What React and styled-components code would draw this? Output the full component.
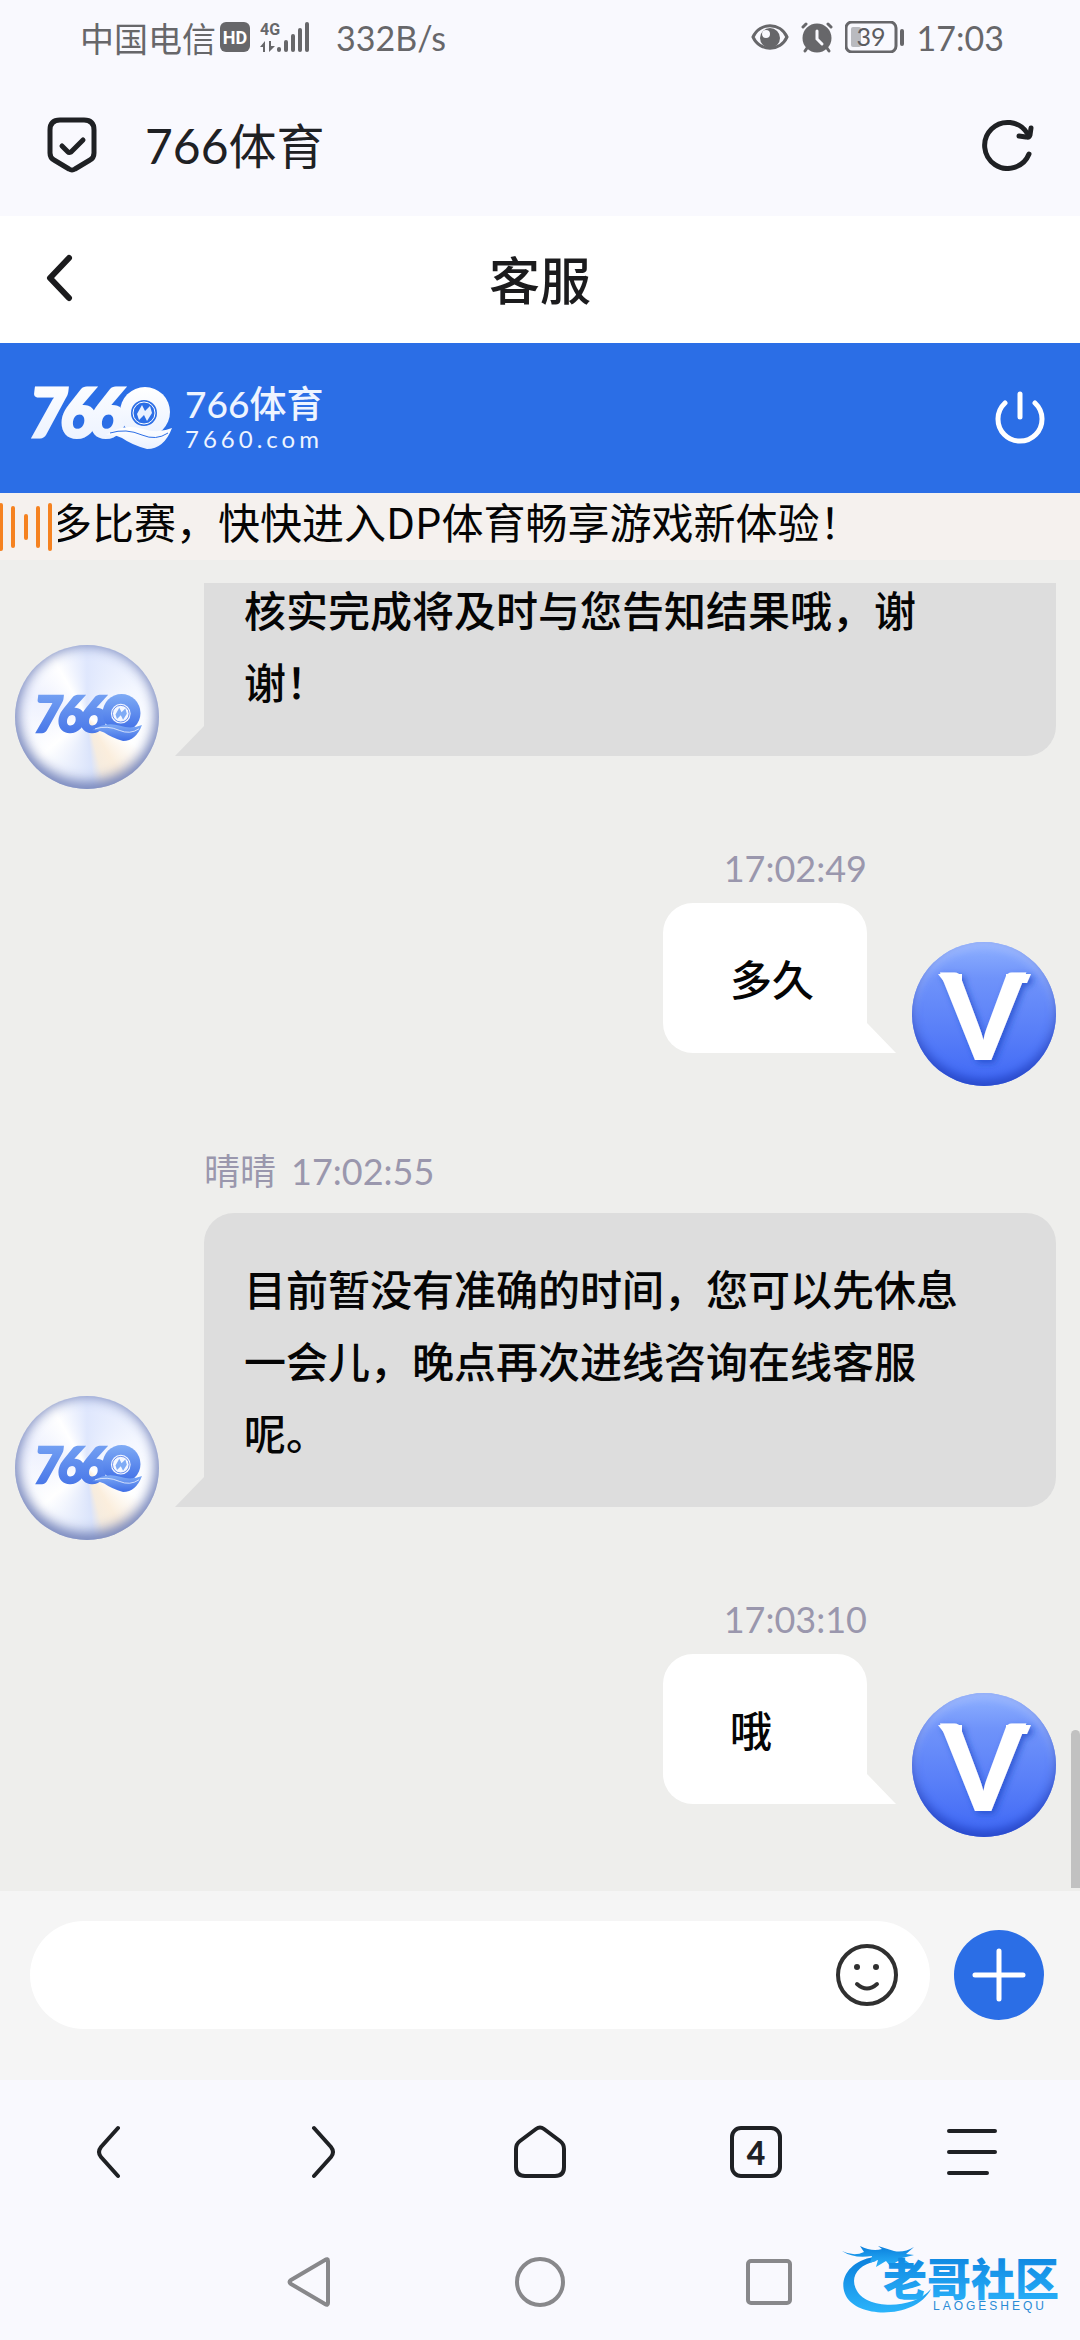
import styled, { createGlobalStyle } from "styled-components"

const App = () => {
  return (
    <Page>
      <GlobalStyle />
      <StatusBar>
        <StatusGroup>
          <span>中国电信</span>
          <HdIcon />
          <SignalIcon />
          <Speed>332B/s</Speed>
        </StatusGroup>
        <StatusGroup $gap="12px">
          <EyeIcon />
          <AlarmIcon />
          <BatteryIcon />
          <span>17:03</span>
        </StatusGroup>
      </StatusBar>

      <AddressBar>
        <ShieldIcon />
        <SiteName>766体育</SiteName>
        <IconButton aria-label="刷新">
          <ReloadIcon />
        </IconButton>
      </AddressBar>

      <TitleBar>
        <IconButton aria-label="返回">
          <BackIcon />
        </IconButton>
        <h1>客服</h1>
      </TitleBar>

      <BrandBar>
        <Brand>
          <BrandMark id="brand" width="140" from="#ffffff" to="#eaf1ff" ball="#2c6ee6" />
          <BrandText>
            <strong>766体育</strong>
            <small>7660.com</small>
          </BrandText>
        </Brand>
        <IconButton aria-label="退出">
          <PowerIcon />
        </IconButton>
      </BrandBar>

      <Notice>
        <WaveIcon />
        <Marquee>多比赛，快快进入DP体育畅享游戏新体验！</Marquee>
      </Notice>

      <Chat>
        <Messages>
          {messages.map((message) => (
            <Message key={message.id} {...message} />
          ))}
        </Messages>
        <ScrollThumb />
      </Chat>

      <Composer>
        <InputWrap>
          <input type="text" aria-label="消息" />
          <IconButton aria-label="表情">
            <SmileIcon />
          </IconButton>
        </InputWrap>
        <AddButton aria-label="更多">
          <PlusIcon />
        </AddButton>
      </Composer>

      <BrowserNav>
        <IconButton aria-label="后退">
          <ChevronIcon />
        </IconButton>
        <IconButton aria-label="前进">
          <ChevronIcon flip />
        </IconButton>
        <IconButton aria-label="主页">
          <HomeIcon />
        </IconButton>
        <TabsButton>4</TabsButton>
        <IconButton aria-label="菜单">
          <MenuIcon />
        </IconButton>
      </BrowserNav>

      <SystemNav>
        <IconButton aria-label="系统返回">
          <TriangleIcon />
        </IconButton>
        <IconButton aria-label="系统主页">
          <CircleIcon />
        </IconButton>
        <IconButton aria-label="最近任务">
          <SquareIcon />
        </IconButton>
        <Watermark>
          <DragonLogo />
        </Watermark>
      </SystemNav>
    </Page>
  )
}

const messages = [
  { id: "m1", text: "核实完成将及时与您告知结果哦，谢谢！" },
  { id: "m2", own: true, time: "17:02:49", text: "多久" },
  { id: "m3", name: "晴晴", time: "17:02:55", text: "目前暂没有准确的时间，您可以先休息一会儿，晚点再次进线咨询在线客服呢。" },
  { id: "m4", own: true, time: "17:03:10", text: "哦" },
]

const Message = ({ id, own, name, time, text }) => (
  <Row $own={own}>
    {own ? (
      <UserAvatar>
        <VMark id={id} />
      </UserAvatar>
    ) : (
      <AgentAvatar>
        <BrandMark id={id} width="106" from="#7fabf5" to="#3f6ee6" ball="#f4f7ff" solid />
      </AgentAvatar>
    )}
    <Content>
      {time && (
        <Meta $own={own}>
          {name && <span>{name}</span>}
          <time>{time}</time>
        </Meta>
      )}
      <Bubble $own={own}>{text}</Bubble>
    </Content>
  </Row>
)

/* ---- icons ---- */

const HdIcon = () => (
  <svg width="30" height="30" viewBox="0 0 30 30">
    <rect width="30" height="30" rx="6" fill="#67676a" />
    <text x="15" y="22" textAnchor="middle" fontFamily="Roboto" fontWeight="700" fontSize="18" fill="#fff">HD</text>
  </svg>
)

const SignalIcon = () => (
  <svg width="50" height="32" viewBox="0 0 50 32" fill="#67676a">
    <text x="0" y="14" fontFamily="Roboto" fontWeight="700" fontSize="16">4G</text>
    <path d="M0 26 L5 20 V31 H3 V26 Z M9 20 H11 V25 H15 L9 31 Z" />
    <rect x="17" y="26" width="4" height="5" rx="2" />
    <rect x="24" y="19" width="4" height="12" rx="2" />
    <rect x="31" y="13" width="4" height="18" rx="2" />
    <rect x="38" y="7" width="4" height="24" rx="2" />
    <rect x="45" y="1" width="4" height="30" rx="2" />
  </svg>
)

const EyeIcon = () => (
  <svg width="38" height="28" viewBox="0 0 38 28">
    <path d="M2 14 C9 -1 29 -1 36 14 C29 29 9 29 2 14 Z" fill="none" stroke="#67676a" strokeWidth="3" />
    <circle cx="19" cy="15" r="10" fill="#67676a" />
    <circle cx="15" cy="11" r="4" fill="#f9f9fe" />
  </svg>
)

const AlarmIcon = () => (
  <svg width="32" height="32" viewBox="0 0 32 32" fill="none" stroke="#67676a" strokeWidth="3" strokeLinecap="round">
    <circle cx="16" cy="17" r="13" fill="#67676a" />
    <path d="M2 6 L5 3 M30 6 L27 3 M6 27 L4 30 M26 27 L28 30" />
    <path d="M16 10 V18 L21 23" stroke="#f9f9fe" />
  </svg>
)

const BatteryIcon = () => (
  <svg width="60" height="32" viewBox="0 0 60 32">
    <rect x="1" y="1" width="50" height="30" rx="6" fill="none" stroke="#67676a" strokeWidth="3" />
    <rect x="6" y="6" width="10" height="20" rx="2" fill="#b9babf" />
    <rect x="55" y="8" width="4" height="17" rx="2" fill="#67676a" />
    <text x="26" y="25" textAnchor="middle" fontFamily="Lato" fontSize="25" fill="#5c5c60">39</text>
  </svg>
)

const ShieldIcon = () => (
  <svg width="50" height="56" viewBox="0 0 50 56" fill="none" stroke="#1f2124" strokeWidth="5" strokeLinecap="round" strokeLinejoin="round">
    <path d="M13 3 H37 Q47 3 47 13 V36 Q47 41 43 43 L28 52 Q25 54 22 52 L7 43 Q3 41 3 36 V13 Q3 3 13 3 Z" />
    <path d="M15 29 L21 35 Q22 36 24 35 L36 23" />
  </svg>
)

const ReloadIcon = () => (
  <svg width="52" height="52" viewBox="0 0 52 52" fill="none" stroke="#1f2124" strokeWidth="5" strokeLinecap="round" strokeLinejoin="round">
    <path d="M47 35 A23 23 0 1 1 45 14" />
    <path d="M49 9 L48 16 Q47 19 44 18 L37 17" />
  </svg>
)

const BackIcon = () => (
  <svg width="28" height="48" viewBox="0 0 28 48" fill="none" stroke="#1b1b1d" strokeWidth="6" strokeLinecap="round" strokeLinejoin="round">
    <path d="M24 4 L5 24 L24 44" />
  </svg>
)

const PowerIcon = () => (
  <svg width="50" height="54" viewBox="0 0 50 54" fill="none" stroke="#fff" strokeWidth="5" strokeLinecap="round">
    <path d="M10 12 A22 22 0 1 0 40 12" />
    <path d="M25 3 V26" />
  </svg>
)

const WaveIcon = () => (
  <svg width="52" height="50" viewBox="0 0 52 50" stroke="#f58220" strokeWidth="4" strokeLinecap="round">
    <path d="M1 3 V47 M13 6 V44 M26 14 V36 M38 6 V44 M50 3 V47" />
  </svg>
)

const SmileIcon = () => (
  <svg width="64" height="64" viewBox="0 0 64 64" fill="none" stroke="#303030" strokeWidth="4" strokeLinecap="round">
    <circle cx="32" cy="32" r="29" />
    <path d="M22 41 Q32 50 42 41" />
    <circle cx="22" cy="24" r="3" fill="#303030" stroke="none" />
    <circle cx="41" cy="24" r="3" fill="#303030" stroke="none" />
  </svg>
)

const PlusIcon = () => (
  <svg width="54" height="54" viewBox="0 0 54 54" stroke="#fff" strokeWidth="5" strokeLinecap="round">
    <path d="M27 3 V51 M3 27 H51" />
  </svg>
)

const ChevronIcon = ({ flip }) => (
  <svg width="26" height="54" viewBox="0 0 26 54" fill="none" stroke="#1f2124" strokeWidth="4" strokeLinecap="round">
    <path d={flip ? "M3 3 L20 22 Q24 27 20 32 L3 51" : "M23 3 L6 22 Q2 27 6 32 L23 51"} />
  </svg>
)

const HomeIcon = () => (
  <svg width="52" height="54" viewBox="0 0 52 54" fill="none" stroke="#1f2124" strokeWidth="4" strokeLinejoin="round">
    <path d="M22 4 Q26 1 30 4 L46 16 Q50 19 50 24 V42 Q50 51 41 51 H11 Q2 51 2 42 V24 Q2 19 6 16 Z" />
  </svg>
)

const MenuIcon = () => (
  <svg width="50" height="48" viewBox="0 0 50 48" stroke="#1f2124" strokeWidth="4" strokeLinecap="round">
    <path d="M2 3 H48 M2 24 H48 M2 45 H40" />
  </svg>
)

const TriangleIcon = () => (
  <svg width="48" height="52" viewBox="0 0 48 52" fill="none" stroke="#88888b" strokeWidth="4" strokeLinejoin="round">
    <path d="M38 4 Q41 2 41 5 V47 Q41 50 38 48 L4 28 Q1 26 4 24 Z" />
  </svg>
)

const CircleIcon = () => (
  <svg width="50" height="50" viewBox="0 0 50 50" fill="none" stroke="#88888b" strokeWidth="4">
    <circle cx="25" cy="25" r="23" />
  </svg>
)

const SquareIcon = () => (
  <svg width="46" height="46" viewBox="0 0 46 46" fill="none" stroke="#88888b" strokeWidth="4">
    <rect x="2" y="2" width="42" height="42" rx="3" />
  </svg>
)

const BrandMark = ({ id, width, from, to, ball, solid }) => (
  <svg width={width} viewBox="0 0 140 62" overflow="visible">
    <defs>
      <linearGradient id={id} x1="0" y1="0" x2="0" y2="1">
        <stop offset="0" stopColor={from} />
        <stop offset="1" stopColor={to} />
      </linearGradient>
    </defs>
    <g fill={`url(#${id})`}>
      <text x="-3 28 57" y="50" fontFamily="Lato" fontWeight="900" fontStyle="italic" fontSize="66" stroke={`url(#${id})`} strokeWidth="3">766</text>
      <circle cx="113" cy="25" r="25" />
      <path d="M74 48 Q92 36 111 42 Q126 47 140 41 Q132 62 115 62 Q100 58 90 51 Q82 47 74 48 Z" />
    </g>
    <circle cx="112" cy="26" r="13" fill={ball} />
    <circle cx="112" cy="26" r="11" fill="none" stroke={solid ? to : from} strokeWidth="1" />
    <path d="M105 27 L110 18 L113 24 L118 19 L120 26 L115 34 L112 28 L107 33 Z" fill={solid ? from : to} />
    <path d="M78 46 Q94 41 110 48 Q124 54 136 46" fill="none" stroke={ball} strokeWidth="1" />
  </svg>
)

const VMark = ({ id }) => (
  <svg width="144" height="144" viewBox="0 0 144 144">
    <defs>
      <filter id={id} x="-20%" y="-20%" width="140%" height="140%">
        <feDropShadow dx="3" dy="3" stdDeviation="3" floodColor="#1f45c4" floodOpacity="0.7" />
      </filter>
    </defs>
    <g fill="#fff" filter={`url(#${id})`}>
      <text x="71" y="118" textAnchor="middle" fontFamily="Lato" fontWeight="900" fontSize="120">V</text>
      <path d="M26 32 H50 V41 H33 Z M94 32 H119 L115 41 H94 Z" />
    </g>
  </svg>
)

const DragonLogo = () => (
  <svg width="228" height="76" viewBox="0 0 228 76">
    <defs>
      <linearGradient id="dragon" x1="0" y1="0" x2="0" y2="1">
        <stop offset="0" stopColor="#0b7fdc" />
        <stop offset="1" stopColor="#2bb4fb" />
      </linearGradient>
    </defs>
    <g fill="url(#dragon)">
      <path d="M34 14 C8 18 -2 38 6 53 C18 76 76 76 91 46 C72 68 24 66 16 46 C10 34 18 22 36 18 Z" />
      <path d="M2 8 Q14 14 24 9 L20 3 Q32 9 42 6 L38 3 L54 8 Q64 10 74 4 L66 11 L74 12 L62 15 L72 22 L58 18 L50 23 L46 18 L36 24 L38 17 L30 20 L32 13 Q14 16 2 8 Z" />
      <text x="43" y="53" fontFamily="Noto Sans CJK SC" fontWeight="900" fontSize="44">老哥社区</text>
    </g>
    <text x="93" y="67" fontFamily="Liberation Sans" fontSize="12" letterSpacing="3" fill="#2a8bd6">LAOGESHEQU</text>
  </svg>
)

/* ---- styles ---- */

const GlobalStyle = createGlobalStyle`
  * {
    box-sizing: border-box;
  }
  body {
    margin: 0;
    font-family: Lato, "Noto Sans CJK SC", sans-serif;
    color: #050505;
    background: #f9f9fe;
  }
  svg {
    display: block;
    flex-shrink: 0;
  }
`

const Page = styled.div`
  display: flex;
  flex-direction: column;
  height: 100vh;
`

const IconButton = styled.button`
  display: flex;
  justify-content: center;
  align-items: center;
  padding: 0;
  border: none;
  background: none;
`

const StatusBar = styled.div`
  display: flex;
  justify-content: space-between;
  align-items: center;
  height: 74px;
  padding: 0 76px 0 80px;
  font-size: 34px;
  color: #67676a;
`

const StatusGroup = styled.div`
  display: flex;
  align-items: center;
  gap: ${(props) => props.$gap || "4px"};
  svg + svg {
    margin-left: ${(props) => (props.$gap ? "0" : "6px")};
  }
`

const Speed = styled.span`
  margin-left: 22px;
`

const AddressBar = styled.div`
  display: flex;
  align-items: center;
  height: 142px;
  padding: 0 46px 0 47px;
  ${IconButton} {
    margin-left: auto;
  }
`

const SiteName = styled.span`
  margin-left: 48px;
  padding-bottom: 4px;
  font-size: 48px;
  color: #1f2124;
`

const TitleBar = styled.header`
  display: grid;
  grid-template-columns: 1fr auto 1fr;
  align-items: center;
  justify-items: start;
  height: 127px;
  padding: 0 45px 4px;
  background: #fff;
  h1 {
    margin: 0;
    font-size: 51px;
    font-weight: 500;
    color: #1b1b1d;
  }
`

const BrandBar = styled.div`
  display: flex;
  justify-content: space-between;
  align-items: center;
  height: 150px;
  padding: 0 35px 0 32px;
  background: #2b6ee6;
`

const Brand = styled.div`
  display: flex;
  align-items: center;
  gap: 13px;
`

const BrandText = styled.div`
  display: flex;
  flex-direction: column;
  color: #eef4ff;
  strong {
    font-size: 37px;
    font-weight: 500;
    line-height: 42px;
  }
  small {
    font-size: 24px;
    line-height: 28px;
    letter-spacing: 4px;
  }
`

const Notice = styled.div`
  display: flex;
  align-items: center;
  gap: 6px;
  height: 67px;
  background: #f5f1ee;
`

const Marquee = styled.div`
  flex: 1;
  overflow: hidden;
  padding-bottom: 12px;
  white-space: nowrap;
  text-indent: -8px;
  font-family: "Noto Sans CJK SC", sans-serif;
  font-size: 42px;
  line-height: 54px;
`

const Chat = styled.main`
  position: relative;
  display: flex;
  flex-direction: column;
  flex: 1;
  min-height: 0;
  padding-top: 23px;
  background: #eeeeec;
`

const Messages = styled.div`
  display: flex;
  flex-direction: column;
  justify-content: flex-end;
  flex: 1;
  gap: 52px;
  min-height: 0;
  overflow: hidden;
  padding: 0 24px 54px 15px;
`

const ScrollThumb = styled.div`
  position: absolute;
  right: 0;
  bottom: 3px;
  width: 9px;
  height: 158px;
  border-radius: 5px 5px 0 0;
  background: #c1c1c1;
`

const Row = styled.div`
  display: flex;
  flex-direction: ${(props) => (props.$own ? "row-reverse" : "row")};
  align-items: flex-end;
  gap: 45px;
`

const Avatar = styled.div`
  display: flex;
  justify-content: center;
  align-items: center;
  flex-shrink: 0;
  width: 144px;
  height: 144px;
  border-radius: 50%;
`

const AgentAvatar = styled(Avatar)`
  padding-left: 4px;
  background: conic-gradient(#dfe7fd, #f4f7ff 60deg, #ffffff 120deg, #fbeedd 150deg, #f6ecdf 165deg, #dbe4fb 175deg, #ffffff 230deg, #eef1fe 290deg, #ffffff 330deg, #dfe7fd);
  box-shadow: inset 0 0 14px #8492c4, inset 0 -6px 14px #7080b8;
`

const UserAvatar = styled(Avatar)`
  background: linear-gradient(#8fb1ff, #6f93fa 25%, #5a80f8 60%, #3f68f5);
  box-shadow: inset 0 -6px 10px #2647c9, inset 0 4px 10px #a5bdfc;
`

const Content = styled.div`
  display: flex;
  flex-direction: column;
  min-width: 0;
  flex: 0 1 auto;
  margin-bottom: 33px;
`

const Meta = styled.div`
  display: flex;
  gap: 15px;
  justify-content: ${(props) => (props.$own ? "flex-end" : "flex-start")};
  padding: ${(props) => (props.$own ? "0 0 8px" : "6px 0 15px")};
  font-size: 36px;
  line-height: 54px;
  color: #9a97ad;
`

const Bubble = styled.div`
  position: relative;
  min-width: 204px;
  padding: ${(props) => (props.$own ? "39px 53px 39px 67px" : "39px 60px 39px 40px")};
  border-radius: ${(props) => (props.$own ? "30px 30px 0 30px" : "30px 30px 30px 0")};
  background: ${(props) => (props.$own ? "#fff" : "#dddddd")};
  font-family: "Noto Sans CJK SC", sans-serif;
  font-size: 42px;
  font-weight: 500;
  line-height: 72px;
  &::after {
    content: "";
    position: absolute;
    bottom: 0;
    ${(props) => (props.$own ? "left: 100%;" : "right: 100%;")}
    width: 29px;
    height: 30px;
    background: inherit;
    clip-path: ${(props) => (props.$own ? "polygon(0 0, 100% 100%, 0 100%)" : "polygon(100% 0, 100% 100%, 0 100%)")};
  }
`

const Composer = styled.div`
  display: flex;
  align-items: center;
  gap: 24px;
  height: 189px;
  padding: 0 36px 21px 30px;
  background: #f5f5f5;
`

const InputWrap = styled.div`
  display: flex;
  align-items: center;
  flex: 1;
  height: 108px;
  padding: 0 31px 0 48px;
  border-radius: 54px;
  background: #fff;
  input {
    flex: 1;
    min-width: 0;
    border: none;
    outline: none;
    background: none;
    font-size: 42px;
  }
`

const AddButton = styled(IconButton)`
  width: 90px;
  height: 90px;
  border-radius: 50%;
  background: #2b6ee6;
`

const BrowserNav = styled.nav`
  display: grid;
  grid-template-columns: repeat(5, 1fr);
  align-items: center;
  justify-items: center;
  height: 144px;
`

const TabsButton = styled(IconButton)`
  width: 52px;
  height: 52px;
  border: 4px solid #1f2124;
  border-radius: 11px;
  font-family: Lato, sans-serif;
  font-size: 32px;
  font-weight: 900;
  color: #1f2124;
`

const SystemNav = styled.nav`
  position: relative;
  display: flex;
  justify-content: center;
  align-items: center;
  height: 116px;
  ${IconButton} {
    width: 229px;
  }
`

const Watermark = styled.div`
  position: absolute;
  right: 12px;
  bottom: 21px;
`

export default App
